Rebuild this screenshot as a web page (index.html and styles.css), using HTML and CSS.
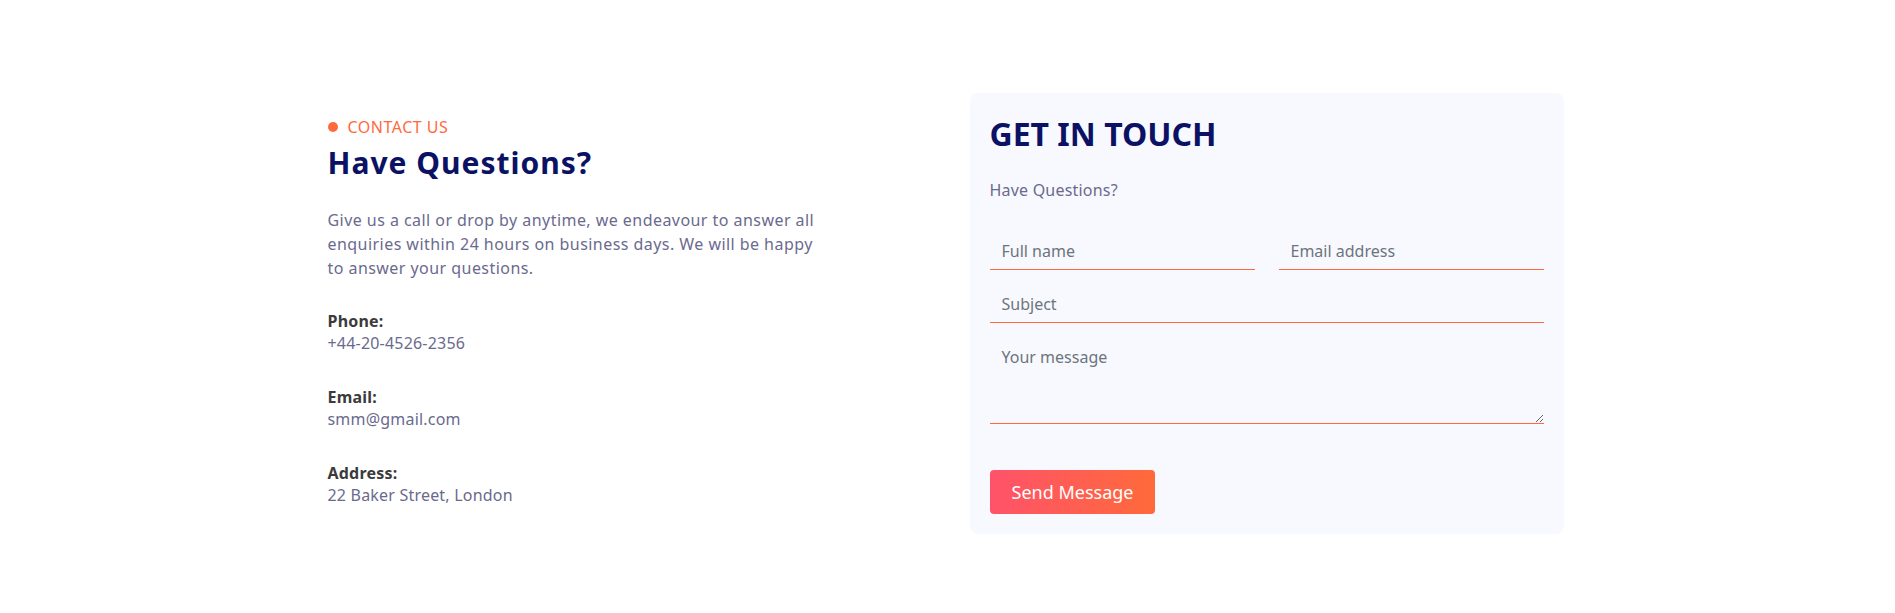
FILE: index.html
```html
<!DOCTYPE html>
<html lang="en">
<head>
<meta charset="utf-8">
<title>Contact</title>
<link rel="stylesheet" href="styles.css">
</head>
<body>
<section class="contact">
  <div class="contact-info">
    <div class="eyebrow"><span class="eyebrow-dot"></span>Contact Us</div>
    <h2 class="info-title">Have Questions?</h2>
    <p class="info-text">Give us a call or drop by anytime, we endeavour to answer all enquiries within 24 hours on business days. We will be happy to answer your questions.</p>
    <div class="info-item">
      <div class="info-label">Phone:</div>
      <div class="info-value">+44-20-4526-2356</div>
    </div>
    <div class="info-item">
      <div class="info-label">Email:</div>
      <div class="info-value">smm@gmail.com</div>
    </div>
    <div class="info-item">
      <div class="info-label">Address:</div>
      <div class="info-value">22 Baker Street, London</div>
    </div>
  </div>
  <form class="contact-card">
    <h3 class="card-title">GET IN TOUCH</h3>
    <p class="card-sub">Have Questions?</p>
    <div class="field-row">
      <input class="field" type="text" placeholder="Full name">
      <input class="field" type="email" placeholder="Email address">
    </div>
    <input class="field field-full" type="text" placeholder="Subject">
    <textarea class="field field-area" rows="3" placeholder="Your message"></textarea>
    <button class="send-btn" type="button">Send Message</button>
  </form>
</section>
</body>
</html>
```
FILE: styles.css
```css
* { box-sizing: border-box; }
html, body { margin: 0; padding: 0; background: #ffffff; }
body {
  font-family: "Noto Sans", "Open Sans", sans-serif;
  font-size: 16px;
  line-height: 24px;
  color: #6a6a8e;
}
.contact {
  width: 1240px;
  margin: 0 auto;
  padding: 93px 4px 0 0;
  display: grid;
  grid-template-columns: 1fr 594px;
  align-items: start;
}
.contact-info { padding-top: 22px; }
.eyebrow {
  display: flex;
  align-items: center;
  gap: 10px;
  color: #ff6a3c;
  text-transform: uppercase;
  font-size: 16px;
  letter-spacing: 0.5px;
  line-height: 24px;
}
.eyebrow-dot {
  width: 10px; height: 10px; border-radius: 50%;
  background: #ff6a3c;
}
.info-title {
  margin: 6px 0 0;
  font-size: 30px;
  line-height: 36px;
  font-weight: 700;
  letter-spacing: 1px;
  color: #0b1264;
}
.info-text {
  margin: 27px 0 32px;
  max-width: 495px;
  font-size: 16px;
  line-height: 24px;
  letter-spacing: 0.45px;
  color: #6a6a8e;
}
.info-item { margin-bottom: 33px; }
.info-item:last-child { margin-bottom: 0; }
.info-label {
  font-weight: 700;
  color: #3b3b3b;
  line-height: 19px;
  letter-spacing: 0.2px;
}
.info-value { color: #6a6a8e; line-height: 24px; letter-spacing: 0.2px; }

.contact-card {
  background: #f8f9fe;
  border-radius: 8px;
  padding: 22px 20px 20px;
  display: flex;
  flex-direction: column;
  align-items: stretch;
}
.card-title {
  margin: 0 0 25px;
  font-size: 32px;
  line-height: 38px;
  font-weight: 700;
  color: #0b1264;
}
.card-sub { margin: 0 0 31px; color: #6a6a8e; letter-spacing: 0.2px; }
.field-row {
  display: grid;
  grid-template-columns: 1fr 1fr;
  column-gap: 24px;
  margin-bottom: 16px;
}
.field {
  display: block;
  width: 100%;
  height: 37px;
  padding: 6px 12px;
  border: 0;
  border-bottom: 1px solid #ff6a3c;
  border-radius: 0;
  background: transparent;
  font-family: inherit;
  font-size: 16px;
  line-height: 24px;
  color: #212529;
  outline: none;
}
.field::placeholder { color: #6c757d; opacity: 1; }
.field-full { margin-bottom: 16px; }
.field-area { height: 85px; resize: vertical; margin-bottom: 46px; }
.send-btn {
  align-self: flex-start;
  height: 44px;
  padding: 0 22px;
  border: 0;
  border-radius: 4px;
  background: linear-gradient(90deg, #ff526a 0%, #ff6a3a 100%);
  color: #ffffff;
  font-family: inherit;
  font-size: 18px;
  line-height: 24px;
}
```
